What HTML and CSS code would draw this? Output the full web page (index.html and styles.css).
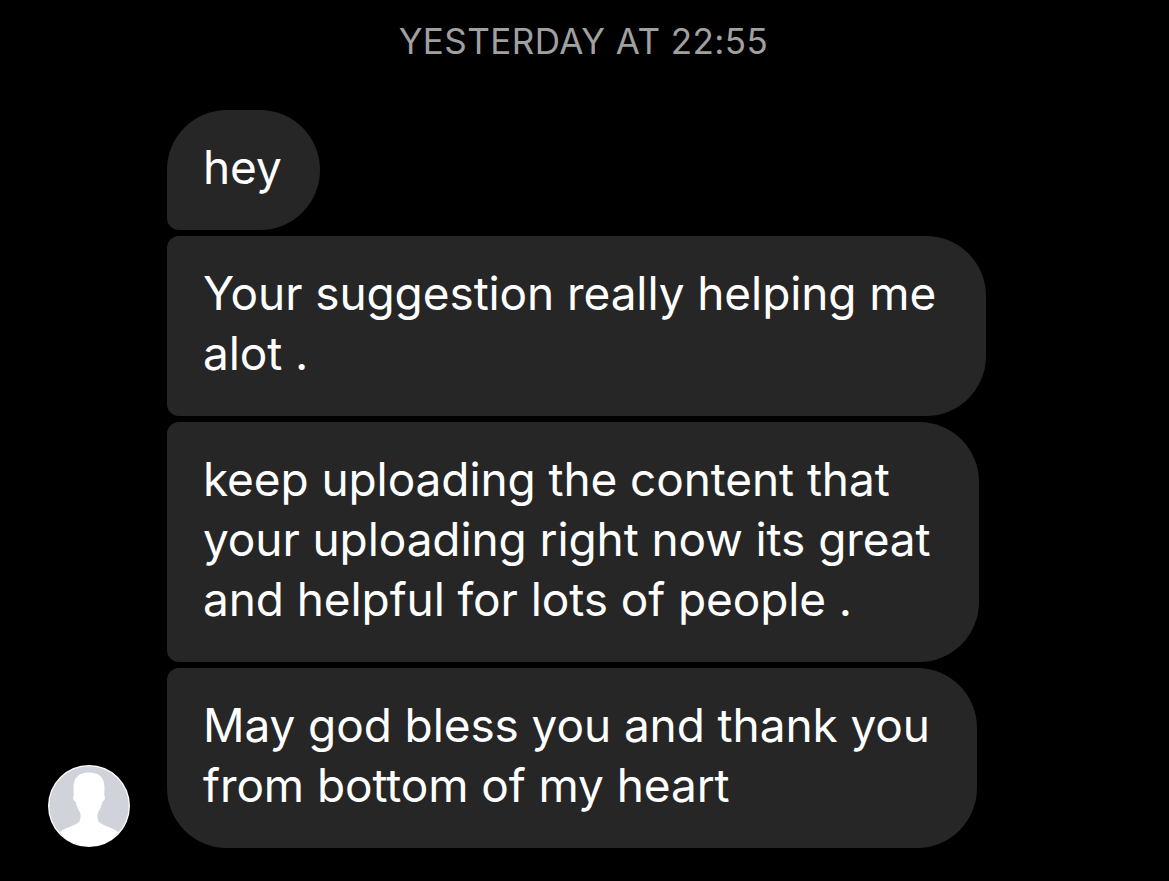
FILE: index.html
```html
<!DOCTYPE html>
<html lang="en">
<head>
    <meta charset="UTF-8">
    <meta name="viewport" content="width=device-width, initial-scale=1.0">
    <title>Messages</title>
    <link rel="stylesheet" href="styles.css">
</head>
<body>
    <div class="thread">
        <div class="timestamp">YESTERDAY AT 22:55</div>
        <div class="group">
            <svg class="avatar" viewBox="0 0 82 82" role="img" aria-label="Profile picture">
                <circle cx="41" cy="41" r="41" fill="#fff"/>
                <circle cx="41" cy="41" r="39.7" fill="#d0d3da"/>
                <clipPath id="avatarClip"><circle cx="41" cy="41" r="40"/></clipPath>
                <path clip-path="url(#avatarClip)" fill="#fff" d="M41 7.500C31 7.500 25.500 12 25.500 23C25.500 27 26 29 25.500 31C24.500 33 25.500 36 27.500 36.500C28.500 41 30 44.500 32 47.500C33 51 32.500 55 31 57C27 61 18 62 12 67C18 76 29 82 41 82C53 82 64 76 70 67C64 62 55 61 51 57C49.500 55 49 51 50 47.500C52 44.500 53.500 41 54.500 36.500C56.500 36 57.500 33 56.500 31C56 29 56.500 27 56.500 23C56.500 12 51 7.500 41 7.500Z"/>
            </svg>
            <div class="bubbles">
                <div class="bubble bubble-first bubble-hey">hey</div>
                <div class="bubble bubble-mid bubble-suggestion">Your suggestion really helping me<br>alot .</div>
                <div class="bubble bubble-mid bubble-content">keep uploading the content that<br>your uploading right now its great<br>and helpful for lots of people .</div>
                <div class="bubble bubble-last bubble-bless">May god bless you and thank you<br>from bottom of my heart</div>
            </div>
        </div>
    </div>
</body>
</html>
```

FILE: styles.css
```css
body {
    font-family: Inter, "Liberation Sans", sans-serif;
    background-color: #000;
    margin: 0;
    padding: 0;
}
.thread {
    padding: 20px 0 33px 48px;
}
.timestamp {
    width: 1071px;
    text-align: center;
    color: #a0a0a0;
    font-size: 35px;
    letter-spacing: 0.45px;
    line-height: 43px;
    margin-bottom: 47px;
}
.group {
    display: flex;
    align-items: flex-end;
    gap: 37px;
}
.avatar {
    width: 82px;
    height: 82px;
    flex-shrink: 0;
    margin-bottom: 1px;
}
.bubbles {
    display: flex;
    flex-direction: column;
    align-items: flex-start;
    gap: 6px;
}
.bubble {
    box-sizing: border-box;
    background-color: #262626;
    color: #fff;
    font-size: 46px;
    letter-spacing: -0.1px;
    line-height: 60px;
    padding: 27px 0 33px 36px;
    white-space: nowrap;
}
.bubble-first {
    border-radius: 60px 60px 60px 12px;
}
.bubble-mid {
    border-radius: 12px 60px 60px 12px;
}
.bubble-last {
    border-radius: 12px 60px 60px 60px;
}
.bubble-hey {
    width: 153px;
}
.bubble-suggestion {
    width: 819px;
}
.bubble-content {
    width: 812px;
}
.bubble-bless {
    width: 810px;
}
```
